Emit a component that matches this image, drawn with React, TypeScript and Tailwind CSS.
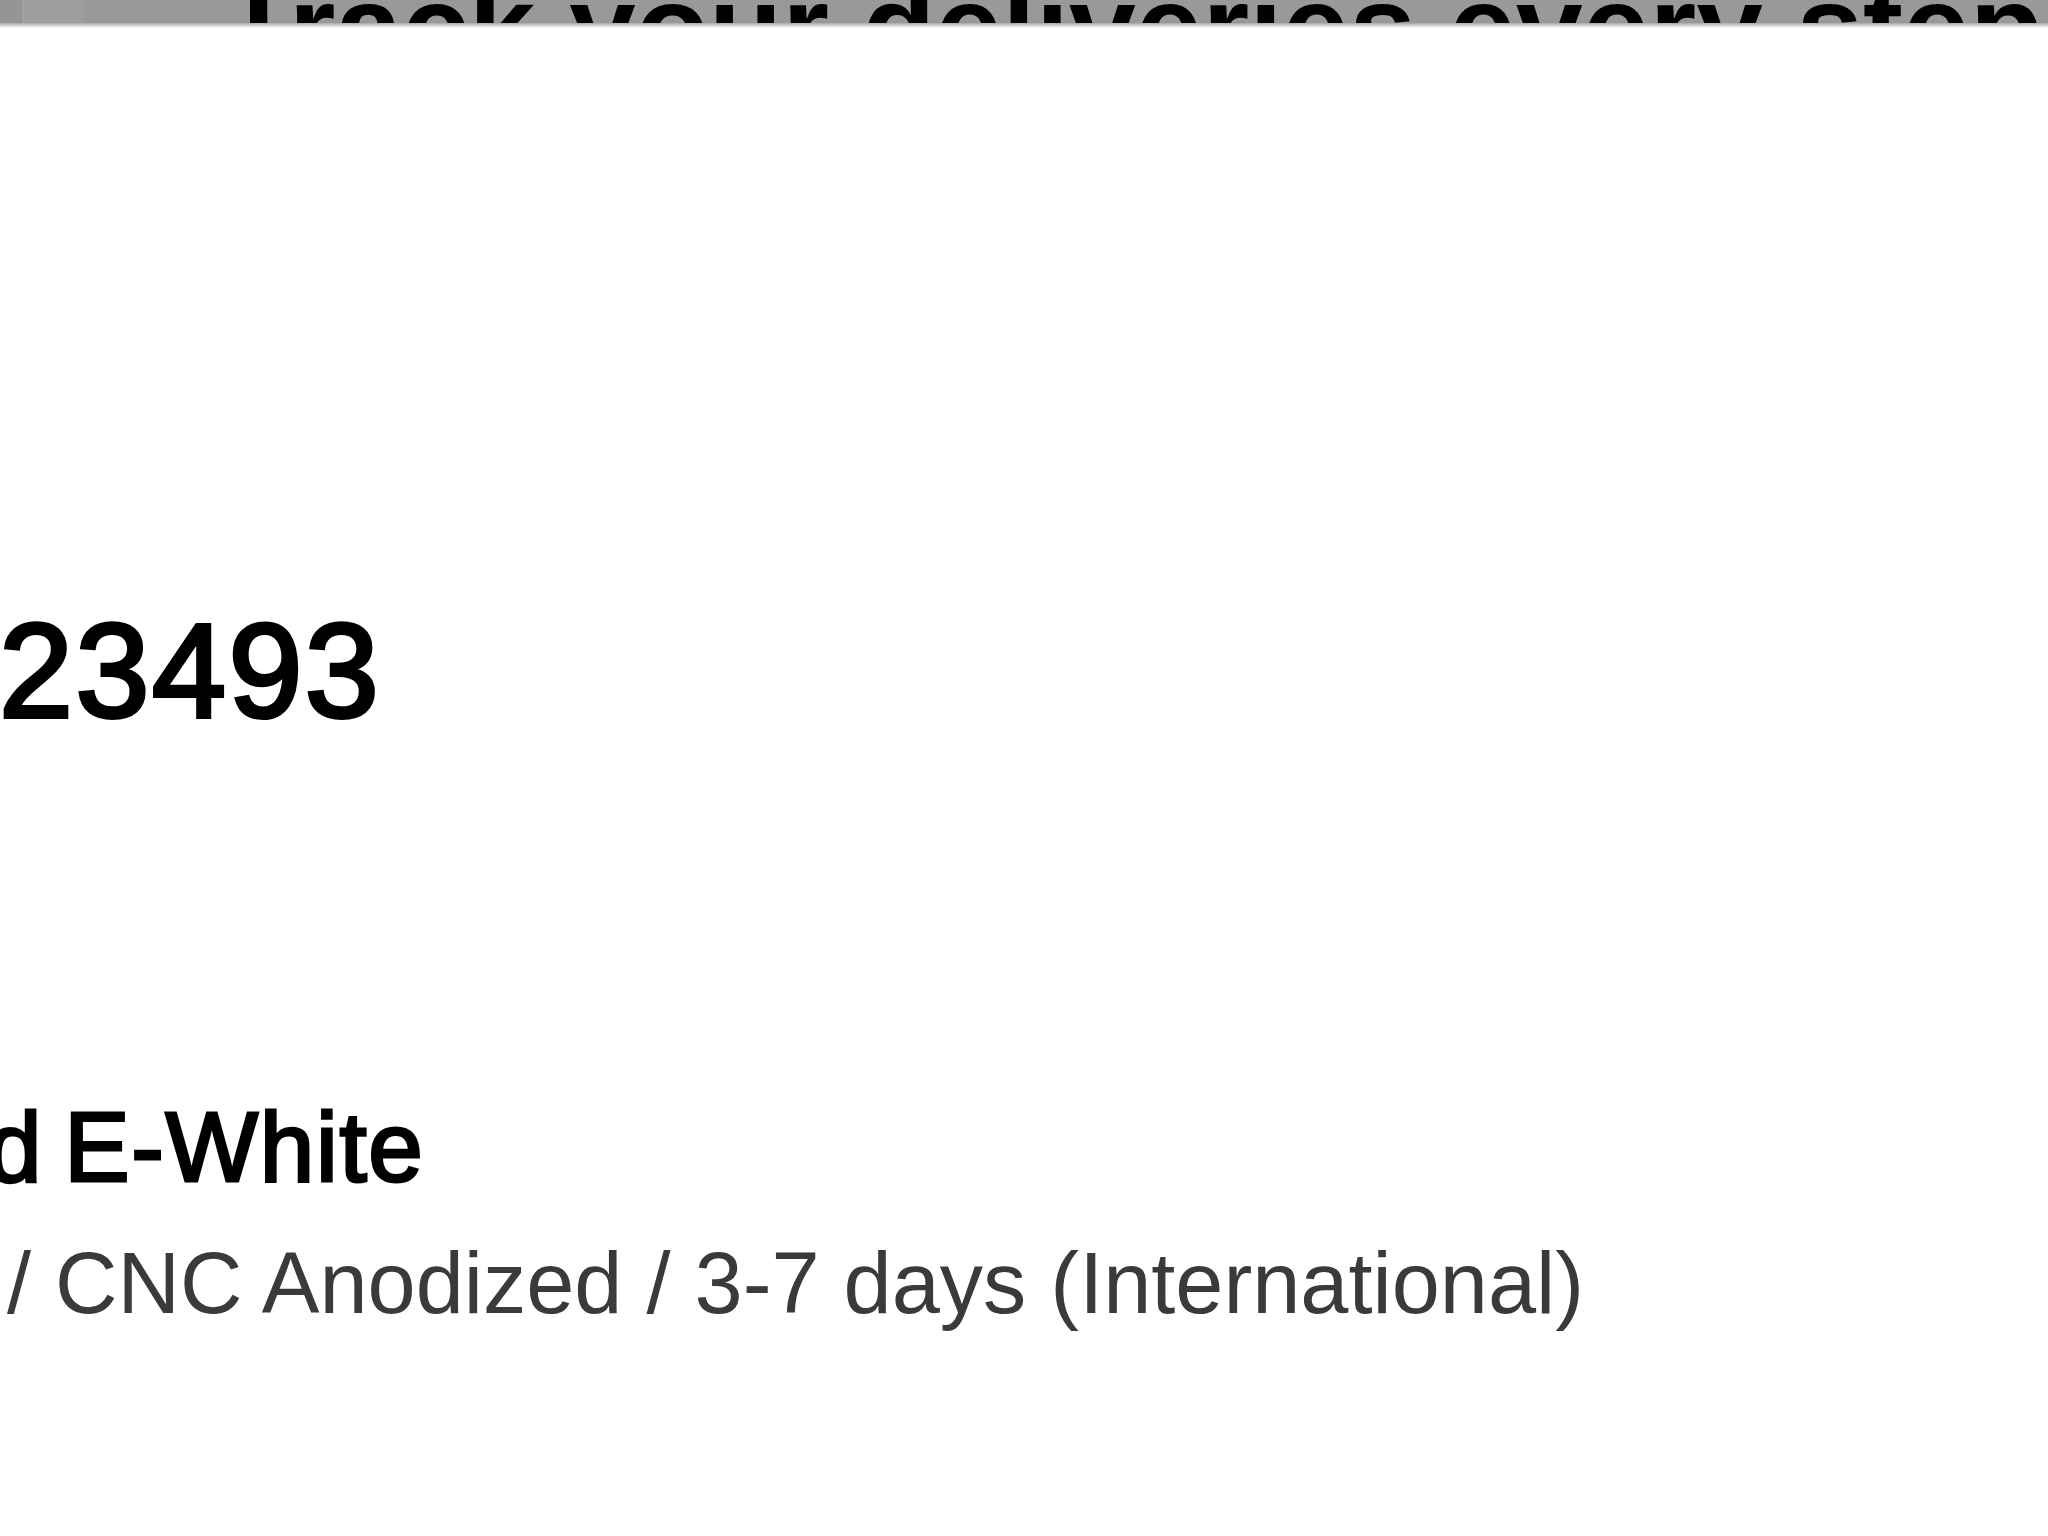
export default function App() {
  return (
    <div className="w-[2048px] h-[1536px] overflow-hidden bg-white font-['Liberation_Sans',Arial,sans-serif] text-black">
      <div className="h-[23px] overflow-hidden bg-[#999999] flex items-start">
        <div className="w-[24px] h-full shrink-0 bg-[#959595] border-r-2 border-[#a2a2a2]" />
        <div className="w-[60px] h-full shrink-0 bg-[#9d9d9d]" />
        <div className="ml-[138px] mt-[-33px] whitespace-nowrap text-[120px] leading-[120px] font-bold text-black">
          Track your deliveries every step
        </div>
      </div>
      <div className="h-[5px] bg-gradient-to-b from-[#a8a8a8] to-white" />

      {/* order number */}
      <div className="mt-[577px] ml-[-1px] whitespace-nowrap text-[133px] leading-none tracking-[2.5px] [-webkit-text-stroke:4px_black]">
        23493
      </div>

      {/* product line */}
      <div className="mt-[360px] ml-[-13px] whitespace-nowrap text-[98px] leading-none tracking-[1.7px] [word-spacing:-8px] [-webkit-text-stroke:3px_black]">
        d E-White
      </div>
      <div className="mt-[44px] ml-[7px] whitespace-nowrap text-[86.5px] leading-none text-[#3a3a3a]">
        / CNC Anodized / 3-7 days (International)
      </div>
    </div>
  );
}
